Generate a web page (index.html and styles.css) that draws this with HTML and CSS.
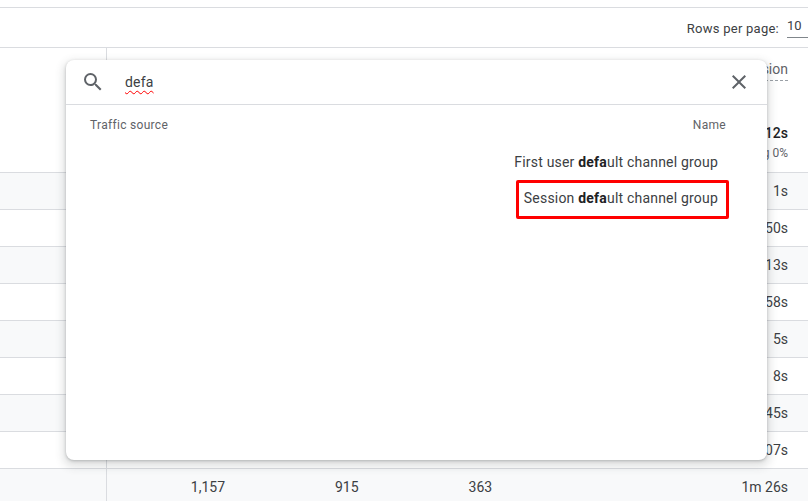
FILE: index.html
```html
<!DOCTYPE html>
<html lang="en">
<head>
  <meta charset="UTF-8">
  <title>Traffic report</title>
  <link rel="stylesheet" href="styles.css">
</head>
<body>
  <div class="report">
    <div class="pager">
      <span class="pager-label">Rows per page:</span>
      <span class="pager-select">10</span>
    </div>
    <div class="head-row">
      <div class="head-left"></div>
      <div class="head-metric">
        <span class="metric-title">session</span>
        <strong class="metric-total">1m 12s</strong>
        <span class="metric-note">Avg 0%</span>
      </div>
    </div>
    <div class="row alt"><span class="cell-first"></span><span class="cell-last">1s</span></div>
    <div class="row"><span class="cell-first"></span><span class="cell-last">50s</span></div>
    <div class="row alt"><span class="cell-first"></span><span class="cell-last">13s</span></div>
    <div class="row"><span class="cell-first"></span><span class="cell-last">58s</span></div>
    <div class="row alt"><span class="cell-first"></span><span class="cell-last">5s</span></div>
    <div class="row"><span class="cell-first"></span><span class="cell-last">8s</span></div>
    <div class="row alt"><span class="cell-first"></span><span class="cell-last">45s</span></div>
    <div class="row"><span class="cell-first"></span><span class="cell-last">07s</span></div>
    <div class="row alt">
      <span class="cell-first"></span>
      <span class="cell-num">1,157</span>
      <span class="cell-num">915</span>
      <span class="cell-num">363</span>
      <span class="cell-last">1m 26s</span>
    </div>
  </div>

  <div class="picker">
    <div class="picker-search">
      <svg class="icon" width="24" height="24" viewBox="0 0 24 24"><path d="M15.5 14h-.79l-.28-.27A6.47 6.47 0 0 0 16 9.5 6.5 6.5 0 1 0 9.5 16c1.61 0 3.09-.59 4.23-1.57l.27.28v.79l5 4.99L20.49 19l-4.99-5zm-6 0C7.01 14 5 11.99 5 9.5S7.01 5 9.5 5 14 7.01 14 9.5 11.99 14 9.5 14z"/></svg>
      <span class="picker-query">defa</span>
      <svg class="icon" width="24" height="24" viewBox="0 0 24 24"><path d="M19 6.41 17.59 5 12 10.59 6.41 5 5 6.41 10.59 12 5 17.59 6.41 19 12 13.41 17.59 19 19 17.59 13.41 12z"/></svg>
    </div>
    <div class="picker-head">
      <span>Traffic source</span>
      <span>Name</span>
    </div>
    <div class="picker-item">First user <b>defa</b>ult channel group</div>
    <div class="picker-item">Session <b>defa</b>ult channel group</div>
    <div class="callout"></div>
  </div>
</body>
</html>
```

FILE: styles.css
```css
body {
  margin: 0;
  width: 808px;
  height: 501px;
  overflow: hidden;
  background: #fff;
  font-family: Roboto, Arial, sans-serif;
  color: #3c4043;
}
.report {
  padding-top: 7px;
}
.pager {
  display: flex;
  justify-content: flex-end;
  align-items: center;
  height: 39px;
  border-top: 1px solid #dadce0;
  border-bottom: 1px solid #dadce0;
  font-size: 13px;
  white-space: nowrap;
}
.pager-label {
  margin-top: 2px;
  letter-spacing: 0.25px;
}
.pager-select {
  width: 21px;
  margin-left: 8px;
  padding-bottom: 4px;
  border-bottom: 1px solid #80868b;
}
.head-row {
  display: flex;
  height: 124px;
}
.head-left {
  width: 106px;
  border-right: 1px solid #dadce0;
}
.head-metric {
  flex: 1;
  display: flex;
  flex-direction: column;
  align-items: flex-end;
  padding: 13px 20px 0 0;
}
.metric-title {
  font-size: 14px;
  line-height: 16px;
  padding-bottom: 3px;
  border-bottom: 1px dashed #9aa0a6;
  color: #5f6368;
}
.metric-total {
  margin-top: 44px;
  font-size: 14px;
  line-height: 16px;
  font-weight: 500;
  color: #202124;
}
.metric-note {
  margin-top: 5px;
  font-size: 12px;
  line-height: 14px;
  color: #5f6368;
}
.row {
  display: flex;
  align-items: center;
  height: 36px;
  border-top: 1px solid #dadce0;
  font-size: 14px;
  line-height: 34px;
}
.row.alt {
  background: #f8f9fa;
}
.cell-first {
  align-self: stretch;
  width: 106px;
  border-right: 1px solid #dadce0;
}
.cell-num {
  width: 118px;
  text-align: right;
}
.cell-num + .cell-num {
  width: 133.6px;
}
.cell-last {
  flex: 1;
  padding-right: 20px;
  text-align: right;
}
.picker {
  position: absolute;
  left: 66px;
  top: 60px;
  width: 701px;
  height: 400px;
  border-radius: 8px;
  background: #fff;
  box-shadow: 0 1px 3px rgba(60, 64, 67, 0.3), 0 4px 8px 3px rgba(60, 64, 67, 0.15);
}
.picker-search {
  display: flex;
  align-items: center;
  height: 44px;
  padding: 0 16px 0 15px;
  border-bottom: 1px solid #dadce0;
}
.icon {
  flex: none;
  fill: #5f6368;
}
.picker-query {
  flex: 1;
  margin-left: 20px;
  font-size: 14px;
  letter-spacing: 0.2px;
  text-decoration: underline wavy #f00 1px;
  text-underline-offset: 3px;
}
.picker-head {
  display: flex;
  justify-content: space-between;
  padding: 12px 41px 0 24px;
  font-size: 12px;
  line-height: 16px;
  letter-spacing: 0.3px;
  color: #5f6368;
}
.picker-item {
  height: 36px;
  padding-right: 49px;
  font-size: 14px;
  line-height: 36px;
  letter-spacing: 0.2px;
  text-align: right;
}
.picker-head + .picker-item {
  margin-top: 11px;
}
.picker-item b {
  font-weight: 700;
  color: #202124;
}
.callout {
  position: absolute;
  left: 450px;
  top: 120px;
  width: 207px;
  height: 33px;
  border: 3px solid #f00;
  border-radius: 2px;
}
```
